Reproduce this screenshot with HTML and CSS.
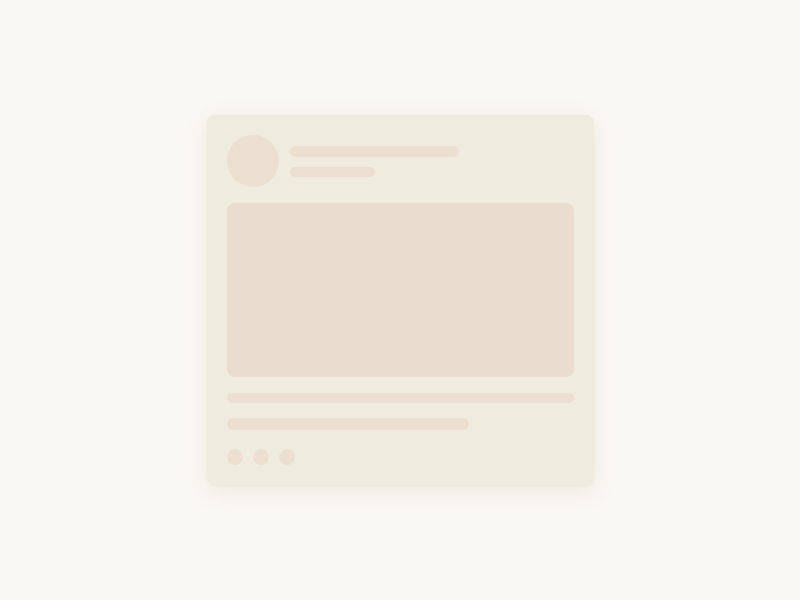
FILE: index.html
```html
<!DOCTYPE html>
<html>
<head>
<meta charset="utf-8">
<link rel="stylesheet" href="styles.css">
</head>
<body>
<div class="stage">
  <div class="card">
    <div class="header">
      <div class="avatar"></div>
      <div class="meta">
        <div class="bar bar-title"></div>
        <div class="bar bar-sub"></div>
      </div>
    </div>
    <div class="media"></div>
    <div class="bar bar-line"></div>
    <div class="bar bar-line short"></div>
    <div class="dots">
      <span class="dot"></span><span class="dot"></span><span class="dot"></span>
    </div>
  </div>
</div>
</body>
</html>
```
FILE: styles.css
```css
html, body {
  margin: 0;
  padding: 0;
  background: #faf8f3;
  font-family: "Liberation Sans", Arial, sans-serif;
}
.stage {
  width: 800px;
  height: 600px;
  display: flex;
  align-items: center;
  justify-content: center;
}
.card {
  width: 347px;
  padding: 20px;
  background: #f0ebdf;
  border-radius: 8px;
  box-shadow: 0 6px 24px rgba(120, 100, 70, 0.10), 0 1px 3px rgba(120, 100, 70, 0.06);
  display: flex;
  flex-direction: column;
}
.header {
  display: flex;
  align-items: center;
  gap: 11px;
}
.avatar {
  width: 52px;
  height: 52px;
  border-radius: 50%;
  background: #ecdfd2;
  flex: none;
}
.meta {
  display: flex;
  flex-direction: column;
  gap: 10px;
}
.bar {
  background: #ecdfd2;
  border-radius: 6px;
}
.bar-title {
  width: 169px;
  height: 11px;
}
.bar-sub {
  width: 85px;
  height: 10px;
}
.media {
  margin-top: 16px;
  height: 174px;
  border-radius: 8px;
  background: #ebdcd0;
}
.bar-line {
  margin-top: 16px;
  height: 10px;
  width: 100%;
}
.bar-line.short {
  margin-top: 15px;
  height: 12px;
  width: 242px;
}
.dots {
  margin-top: 19px;
  display: flex;
  gap: 10px;
}
.dot {
  width: 16px;
  height: 16px;
  border-radius: 50%;
  background: #ecdfd2;
}
```
